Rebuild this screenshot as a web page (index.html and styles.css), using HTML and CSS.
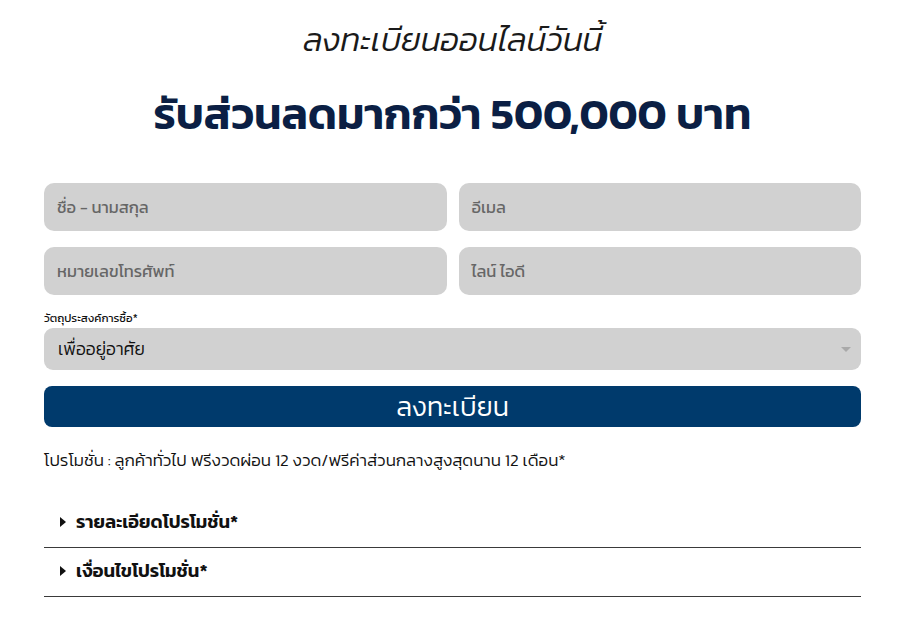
FILE: index.html
```html
<!DOCTYPE html>
<html lang="th">
<head>
<meta charset="utf-8">
<link rel="stylesheet" href="styles.css">
</head>
<body>
<div class="page">
  <h2 class="subtitle">ลงทะเบียนออนไลน์วันนี้</h2>
  <h1 class="title">รับส่วนลดมากกว่า 500,000 บาท</h1>
  <form class="form">
    <div class="grid">
      <div class="field">ชื่อ - นามสกุล</div>
      <div class="field">อีเมล</div>
      <div class="field">หมายเลขโทรศัพท์</div>
      <div class="field">ไลน์ ไอดี</div>
    </div>
    <label class="label">วัตถุประสงค์การซื้อ*</label>
    <div class="select">
      <span>เพื่ออยู่อาศัย</span>
      <span class="caret"></span>
    </div>
    <div class="button">ลงทะเบียน</div>
  </form>
  <p class="promo">โปรโมชั่น : ลูกค้าทั่วไป ฟรีงวดผ่อน 12 งวด/ฟรีค่าส่วนกลางสูงสุดนาน 12 เดือน*</p>
  <div class="acc">
    <div class="acc-item"><span class="tri"></span>รายละเอียดโปรโมชั่น*</div>
    <div class="acc-item"><span class="tri"></span>เงื่อนไขโปรโมชั่น*</div>
  </div>
</div>
</body>
</html>
```
FILE: styles.css
```css
* { box-sizing: border-box; }
body {
  margin: 0;
  background: #fff;
  font-family: "Kanit", "Noto Sans", sans-serif;
  color: #111;
}
.page {
  width: 817px;
  margin-left: 44px;
  padding-top: 18px;
}
.subtitle {
  margin: 0;
  text-align: center;
  font-size: 33px;
  font-weight: 300;
  font-style: italic;
  line-height: 44px;
  color: #1a1a1a;
}
.title {
  margin: 24px 0 0;
  text-align: center;
  font-size: 44px;
  font-weight: 600;
  line-height: 56px;
  color: #0b1f44;
}
.form { margin-top: 41px; }
.grid {
  display: grid;
  grid-template-columns: 1fr 1fr;
  column-gap: 12px;
  row-gap: 16px;
}
.field {
  height: 48px;
  background: #d1d1d1;
  border-radius: 10px;
  padding: 0 13px;
  display: flex;
  align-items: center;
  font-size: 16.5px;
  font-weight: 400;
  color: #666;
}
.label {
  display: block;
  margin-top: 15px;
  font-size: 11.5px;
  line-height: 16px;
  color: #111;
}
.select {
  margin-top: 2px;
  height: 42px;
  background: #d1d1d1;
  border-radius: 9px;
  padding: 0 10px 0 14px;
  display: flex;
  align-items: center;
  justify-content: space-between;
  font-size: 17.5px;
  font-weight: 300;
  color: #111;
}
.caret {
  width: 0; height: 0;
  border-left: 5px solid transparent;
  border-right: 5px solid transparent;
  border-top: 5px solid #a9a9a9;
}
.button {
  margin-top: 16px;
  height: 41px;
  background: #003a6c;
  border-radius: 8px;
  display: flex;
  align-items: center;
  justify-content: center;
  color: #fff;
  font-size: 27px;
  font-weight: 300;
}
.promo {
  margin: 22px 0 0;
  font-size: 17px;
  font-weight: 300;
  line-height: 22px;
  color: #111;
}
.acc { margin-top: 28px; }
.acc-item {
  height: 49px;
  padding-bottom: 3px;
  border-bottom: 1px solid #3a3a3a;
  display: flex;
  align-items: center;
  padding-left: 16px;
  font-size: 18.5px;
  font-weight: 600;
  color: #111;
}
.tri {
  width: 0; height: 0;
  border-top: 5px solid transparent;
  border-bottom: 5px solid transparent;
  border-left: 6px solid #111;
  margin-right: 10px;
}
```
